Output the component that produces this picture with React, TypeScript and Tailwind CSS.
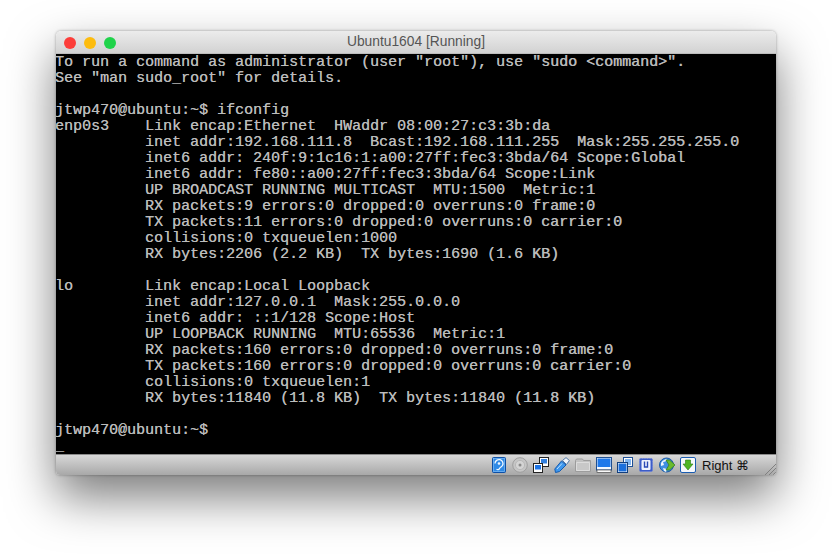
const LINES = [
  'To run a command as administrator (user "root"), use "sudo <command>".',
  'See "man sudo_root" for details.',
  '',
  'jtwp470@ubuntu:~$ ifconfig',
  'enp0s3    Link encap:Ethernet  HWaddr 08:00:27:c3:3b:da',
  '          inet addr:192.168.111.8  Bcast:192.168.111.255  Mask:255.255.255.0',
  '          inet6 addr: 240f:9:1c16:1:a00:27ff:fec3:3bda/64 Scope:Global',
  '          inet6 addr: fe80::a00:27ff:fec3:3bda/64 Scope:Link',
  '          UP BROADCAST RUNNING MULTICAST  MTU:1500  Metric:1',
  '          RX packets:9 errors:0 dropped:0 overruns:0 frame:0',
  '          TX packets:11 errors:0 dropped:0 overruns:0 carrier:0',
  '          collisions:0 txqueuelen:1000',
  '          RX bytes:2206 (2.2 KB)  TX bytes:1690 (1.6 KB)',
  '',
  'lo        Link encap:Local Loopback',
  '          inet addr:127.0.0.1  Mask:255.0.0.0',
  '          inet6 addr: ::1/128 Scope:Host',
  '          UP LOOPBACK RUNNING  MTU:65536  Metric:1',
  '          RX packets:160 errors:0 dropped:0 overruns:0 frame:0',
  '          TX packets:160 errors:0 dropped:0 overruns:0 carrier:0',
  '          collisions:0 txqueuelen:1',
  '          RX bytes:11840 (11.8 KB)  TX bytes:11840 (11.8 KB)',
  '',
  'jtwp470@ubuntu:~$',
  '_',
];

function Icons() {
  return (
    <div className="flex items-center gap-[5px]">
      <svg width="16" height="16" viewBox="0 0 16 16">
        <rect x="1.500" y="0.500" width="13" height="15" rx="1" fill="#2f8ae6" stroke="#0d4fa6" />
        <rect x="2.500" y="1.500" width="11" height="13" fill="none" stroke="#8cc4f6" strokeWidth="0.600" />
        <path d="M4 6.500a4 4 0 1 1 7.500 2c-.8 1.500-2.500 1.500-3 3-.4 1.200-1.800 1.500-3 .8" fill="none" stroke="#f2f8ff" strokeWidth="1.300" />
        <circle cx="8" cy="6.500" r="1.300" fill="#f2f8ff" />
      </svg>
      <svg width="16" height="16" viewBox="0 0 16 16">
        <circle cx="8" cy="8" r="7.300" fill="#c6c6c6" stroke="#9e9e9e" />
        <circle cx="8" cy="8" r="4.600" fill="#d4d4d4" stroke="#b8b8b8" />
        <circle cx="8" cy="8" r="1.500" fill="#8a8a8a" />
      </svg>
      <svg width="16" height="16" viewBox="0 0 16 16">
        <rect x="6.500" y="0.500" width="9" height="9" fill="#fff" stroke="#222" />
        <rect x="8" y="2" width="6" height="4.500" fill="#2f7fe0" />
        <rect x="0.500" y="6.500" width="9" height="9" fill="#fff" stroke="#222" />
        <rect x="2" y="8" width="6" height="4.500" fill="#1c74e6" />
      </svg>
      <svg width="16" height="16" viewBox="0 0 16 16">
        <path d="M1.500 15.500 .8 12 7.500 4l4.500 4-6.500 6.500Z" fill="#3d97ee" stroke="#155aae" />
        <path d="M3 12 8 6.500" stroke="#bfe0fb" strokeWidth="1" />
        <path d="M8.500 3.500 12 .6 15.400 3.500 12.500 7.500Z" fill="#f2f5f9" stroke="#4f77a8" />
      </svg>
      <svg width="16" height="16" viewBox="0 0 16 16">
        <path d="M.5 3.500 1.500 2h6l1 1.500h7v11H.5Z" fill="#c2c2c2" stroke="#9c9c9c" />
        <path d="M1.500 5.500h13v8h-13Z" fill="#c8c8c8" stroke="#dcdcdc" />
      </svg>
      <svg width="16" height="16" viewBox="0 0 16 16">
        <rect x="0.500" y="0.500" width="15" height="12.500" fill="#f4f8ff" stroke="#1f4f90" />
        <rect x="1.500" y="1.500" width="13" height="8.500" fill="#1e78ea" />
        <rect x="1" y="13" width="14" height="2.500" fill="#fafafa" stroke="#333" strokeWidth="0.600" />
      </svg>
      <svg width="16" height="16" viewBox="0 0 16 16">
        <rect x="6.500" y="0.500" width="9" height="9" fill="#fff" stroke="#1d4f96" />
        <rect x="8" y="2" width="6" height="6" fill="#7fb4f0" />
        <rect x="0.500" y="5.500" width="10" height="10" fill="#fff" stroke="#123f7e" />
        <rect x="1.500" y="6.500" width="8" height="8" fill="#1b6fdc" />
      </svg>
      <svg width="16" height="16" viewBox="0 0 16 16">
        <rect x="1.500" y="1.500" width="13" height="13" rx="1" fill="#3c5cc8" stroke="#6a80d8" strokeDasharray="1.500 1" />
        <rect x="3.500" y="3" width="9" height="10" rx="1" fill="#eef2fd" />
        <path d="M6.500 4.500v5.500h3V4.500" fill="none" stroke="#2848b4" strokeWidth="1.400" />
      </svg>
      <svg width="16" height="16" viewBox="0 0 16 16">
        <circle cx="7.500" cy="8" r="7" fill="#3f8fe2" stroke="#1e5ba8" />
        <path d="M2 6c2-3 4-4 6-4 0 2-2 3-4 3l1 3-3 1ZM4 11l4 1-1 3-2-1Z" fill="#f0f6fc" />
        <path d="M7 3h3.500L16 8l-5.500 5H7l3-5Z" fill="#6abb2e" stroke="#2f7a14" strokeWidth="0.700" />
      </svg>
      <svg width="16" height="16" viewBox="0 0 16 16">
        <rect x="0.500" y="0.500" width="15" height="15" rx="1.500" fill="#f6f8fb" stroke="#1a5cb0" />
        <path d="M5.500 3h5v4H13l-5 6-5-6h2.500Z" fill="#4fb524" stroke="#2a7a10" strokeWidth="0.600" />
      </svg>
    </div>
  );
}

export default function App() {
  return (
    <div className="w-[832px] h-[555px] overflow-hidden bg-white pl-[56px] pt-[31px]">
      <div className="relative w-[720px] h-[444px] flex flex-col rounded-t-[5px] rounded-b-[4px] overflow-hidden shadow-[0_22px_48px_rgba(0,0,0,0.52),0_0_3px_rgba(0,0,0,0.35)]">
        <div className="relative h-[23px] shrink-0 flex items-center justify-center bg-gradient-to-b from-[#ececec] to-[#d2d2d2] border-b border-[#bdbdbd]">
          <div className="absolute left-[8px] top-[6px] flex gap-[8px]">
            <div className="w-3 h-3 rounded-full bg-[#fc3d39]" />
            <div className="w-3 h-3 rounded-full bg-[#fdbc0e]" />
            <div className="w-3 h-3 rounded-full bg-[#1fd34a]" />
          </div>
          <span className="text-[#555555] text-[13.8px] leading-none font-['Liberation_Sans',sans-serif]">Ubuntu1604 [Running]</span>
        </div>
        <div className="h-[400px] shrink-0 overflow-hidden bg-black pt-px">
          <pre className="-ml-px text-[#bcbcbc] text-[15px] leading-[16px] [text-shadow:0.3px_0_0_#a8a8a8] font-['Liberation_Mono',monospace]">
            {LINES.join('\n')}
          </pre>
        </div>
        <div className="relative h-[21px] shrink-0 flex items-center justify-end pr-[27px] gap-[6px] bg-gradient-to-b from-[#d8d8d8] to-[#a8a8a8] border-t border-[#8a8a8a]">
          <Icons />
          <span className="text-[#111] text-[13px] leading-none font-['Liberation_Sans',sans-serif]">Right ⌘</span>
          <svg className="absolute right-0 bottom-0" width="12" height="12" viewBox="0 0 12 12">
            <path d="M1 12 12 1M5 12l7-7M9 12l3-3" stroke="#808080" strokeWidth="1" />
          </svg>
        </div>
      </div>
    </div>
  );
}
